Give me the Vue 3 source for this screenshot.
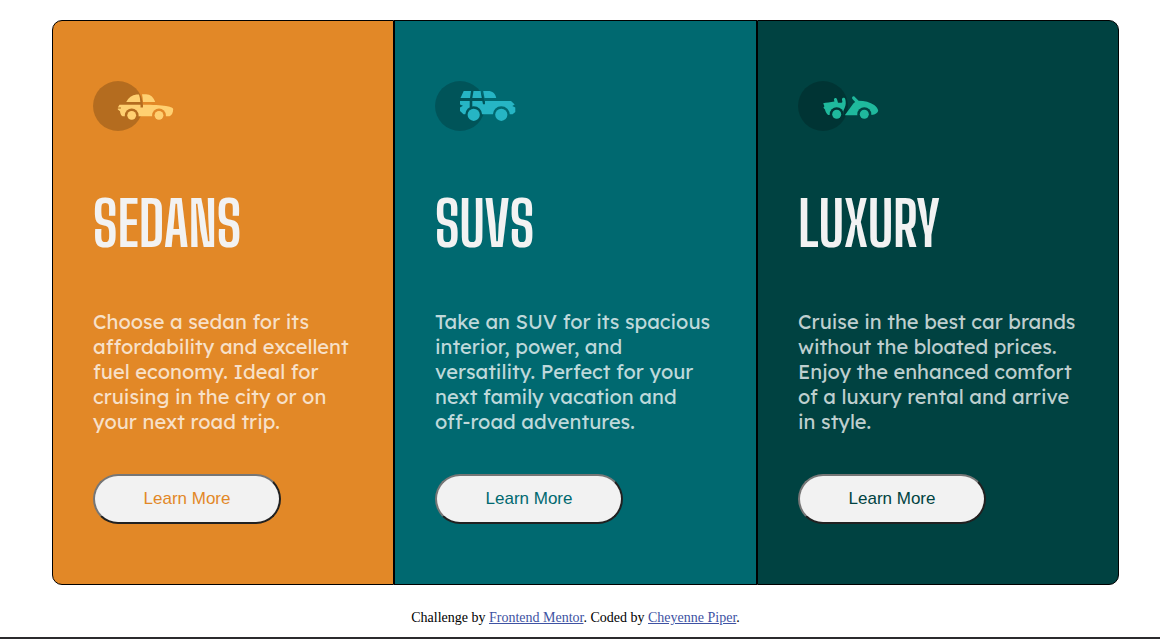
<script setup>
const cards = [
  {
    id: 'sedans',
    title: 'SEDANS',
    lines: ['Choose a sedan for its', 'affordability and excellent', 'fuel economy. Ideal for', 'cruising in the city or on', 'your next road trip.'],
  },
  {
    id: 'suvs',
    title: 'SUVS',
    lines: ['Take an SUV for its spacious', 'interior, power, and', 'versatility. Perfect for your', 'next family vacation and', 'off-road adventures.'],
  },
  {
    id: 'luxury',
    title: 'LUXURY',
    lines: ['Cruise in the best car brands', 'without the bloated prices.', 'Enjoy the enhanced comfort', 'of a luxury rental and arrive', 'in style.'],
  },
]
</script>

<template>
  <div class="page">
    <main class="cards">
      <article v-for="card in cards" :key="card.id" class="card" :class="card.id">
        <svg class="icon" viewBox="0 0 82 50" aria-hidden="true">
          <circle class="disc" cx="25" cy="25" r="25" />
          <g v-if="card.id === 'sedans'" fill="#ffd071">
            <mask id="sedan-arches">
              <rect width="82" height="50" fill="#fff" />
              <circle cx="38.7" cy="34.3" r="6.9" fill="#000" />
              <circle cx="66" cy="34.3" r="6.9" fill="#000" />
            </mask>
            <path d="M33.2 21C35.5 16.5 39 14 43.5 13.6L46 13.5C46.8 16 47.2 18.5 47.3 21Z" />
            <path d="M49 13.3H53C57.5 13.3 60.5 16.2 62.2 21H50C49.9 18.3 49.6 15.8 49 13.3Z" />
            <path mask="url(#sedan-arches)" d="M26.5 23.8H47.5V26.6H50V23.8C60 23.8 68 24.2 73 25C76.5 25.7 80 26.4 80.2 28C80.2 31.5 78.8 34.5 76.5 35.2H29.5C28 34.5 27.2 32.2 27 30.2L24.8 28.4V27.6H28V26.4H24.8Z" />
            <circle cx="38.7" cy="34.3" r="4.4" />
            <circle cx="66" cy="34.3" r="4.4" />
          </g>
          <g v-else-if="card.id === 'suvs'" fill="#26b5c4">
            <mask id="suv-arches">
              <rect width="82" height="50" fill="#fff" />
              <circle cx="38.7" cy="33.8" r="8.5" fill="#000" />
              <circle cx="66.3" cy="33.8" r="8.5" fill="#000" />
            </mask>
            <path d="M28.7 10H36L35 17H25.5Z" />
            <path d="M38.5 10H45.6L46.8 17H37.3Z" />
            <path d="M48.2 10H53C57.5 10 60.3 12.3 61.2 17H49.5Z" />
            <path mask="url(#suv-arches)" d="M25 20H34.7V26H37.3V20H47.3L48 23.3H50V20H76L79.7 23.4L77.3 25L80.3 26.5V31L77.5 33.2H28.5L25 30V26.5L28 24.7L25 23.5Z" />
            <circle cx="38.7" cy="33.8" r="6.1" />
            <circle cx="66.3" cy="33.8" r="6.1" />
          </g>
          <g v-else fill="#1fb99d">
            <mask id="luxury-arches">
              <rect width="82" height="50" fill="#fff" />
              <circle cx="38.7" cy="33.2" r="7" fill="#000" />
              <circle cx="66.3" cy="33.2" r="7" fill="#000" />
            </mask>
            <path mask="url(#luxury-arches)" d="M25.2 22.3C28 21.8 32.5 21.6 36.4 20.6L35.9 18.5C36 16.5 38.5 16.3 39 18.2L40 21.7H43.5C45.2 21.3 43.8 19.5 44 18C44.5 16.4 46.8 16.5 47.3 18.2C48 21 48 24 46.8 26.5L45.3 30V34H30.2C28.6 32.7 27.3 30.5 27 28.4L25.4 26.8L26.4 25.2Z" />
            <path mask="url(#luxury-arches)" d="M46.8 34.2L54.6 23.4C55.4 22.3 56.2 21.5 57.2 21L54.4 18C53.4 16.5 55 14.6 56.6 15.7L60.6 19.7C66.5 19.8 72.2 21 76.2 24C78.8 26 80 28.3 80.2 29.8C79.6 31.8 77.8 33.4 75 33.8L70 34.2Z" />
            <circle cx="38.7" cy="33.2" r="4.5" />
            <circle cx="66.3" cy="33.2" r="4.5" />
          </g>
        </svg>
        <h1 class="title">{{ card.title }}</h1>
        <p class="copy">{{ card.lines.join('\n') }}</p>
        <button type="button" class="more">Learn More</button>
      </article>
    </main>
    <footer class="attribution">
      Challenge by <a href="#">Frontend Mentor</a>. Coded by <a href="#">Cheyenne Piper</a>.
    </footer>
  </div>
</template>

<style>
body {
  background: #fff;
}
</style>

<style scoped>
.page {
  box-sizing: border-box;
  min-height: 100vh;
  padding-top: 20px;
  border-bottom: 2px solid #2b2a2d;
}
.cards {
  display: grid;
  grid-template-columns: 342fr 363fr 362fr;
  margin: 0 41px 0 52px;
}
.card {
  display: flex;
  flex-direction: column;
  align-items: flex-start;
  padding: 60px 40px;
  border: 1px solid #000;
}
.sedans {
  background: #e28827;
  border-radius: 10px 0 0 10px;
  --accent: #e28827;
}
.suvs {
  background: #006970;
  --accent: #006970;
}
.luxury {
  background: #004241;
  border-radius: 0 10px 10px 0;
  --accent: #004241;
}
.icon {
  width: 82px;
  height: 50px;
}
.disc {
  fill: #000;
  opacity: 0.2;
}
.title {
  margin: 61px 0 0;
  color: #f2f2f2;
  font: bold 60px/64px "Big Shoulders Display", sans-serif;
}
.copy {
  margin: 53px 0 40px;
  color: rgba(255, 255, 255, 0.75);
  font: 20px/25px "Lexend Deca", Inter, sans-serif;
  white-space: pre;
}
.more {
  box-sizing: border-box;
  width: 188px;
  height: 50px;
  padding: 0;
  border: 2px solid;
  border-color: #767676 #212121 #212121 #767676;
  border-radius: 25px;
  background: #f2f2f2;
  color: var(--accent);
  font: 17px/20px "Liberation Sans", Arial, sans-serif;
}
.attribution {
  margin-top: 24px;
  padding-right: 9px;
  color: #000;
  font: 14px/18px "Liberation Serif", "Times New Roman", serif;
  text-align: center;
}
.attribution a {
  color: #3e52a3;
}
</style>
